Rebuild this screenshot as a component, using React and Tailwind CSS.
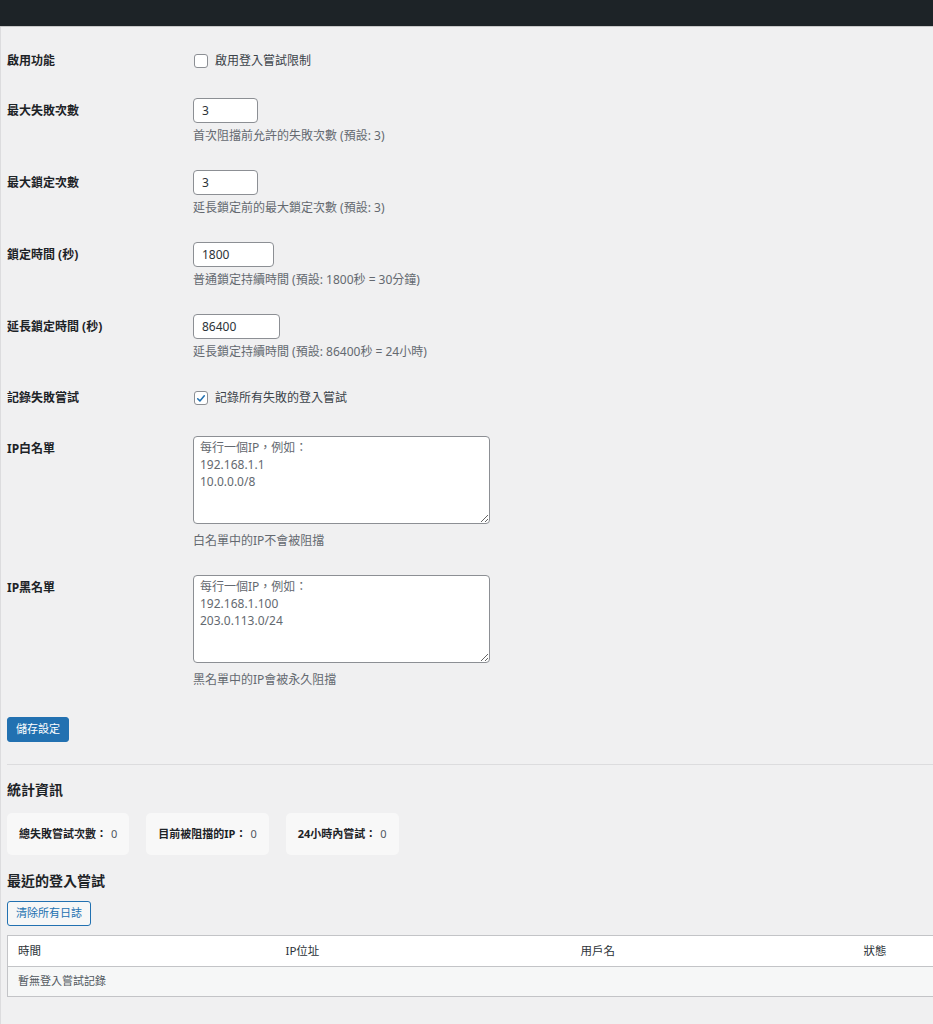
import React from "react";

const font = { fontFamily: '"Noto Sans", "Noto Sans CJK TC", sans-serif' };

function Check({ checked }) {
  return (
    <span className="ml-[1px] flex h-[14px] w-[14px] items-center justify-center rounded-[3px] border border-[#8c8f94] bg-white">
      {checked && (
        <svg viewBox="0 0 20 20" className="h-[13px] w-[13px]">
          <path d="M4.5 10.5 L8.2 14 L15.5 5.5" fill="none" stroke="#2271b1" strokeWidth="2.6" strokeLinecap="round" strokeLinejoin="round" />
        </svg>
      )}
    </span>
  );
}

function CheckRow({ label, text, checked, h }) {
  return (
    <div className={`grid grid-cols-[186px_1fr] items-center ${h}`}>
      <div className="text-[12px] font-bold leading-[16px] text-[#1d2327]">{label}</div>
      <label className="flex items-center gap-[7px] text-[12px] leading-[16px] text-[#3c434a]">
        <Check checked={checked} />
        <span>{text}</span>
      </label>
    </div>
  );
}

function InputRow({ label, value, w, desc }) {
  return (
    <div className="grid grid-cols-[186px_1fr] py-[13px]">
      <div className="text-[12px] font-bold leading-[25px] text-[#1d2327]">{label}</div>
      <div>
        <div className={`flex h-[25px] items-center rounded-[4px] border border-[#8c8f94] bg-white px-[8px] text-[12px] text-[#2c3338] ${w}`}>
          {value}
        </div>
        <p className="mt-[5px] text-[12px] leading-[16px] text-[#646970]">{desc}</p>
      </div>
    </div>
  );
}

function AreaRow({ label, placeholder, desc }) {
  return (
    <div className="grid grid-cols-[186px_1fr] py-[13px]">
      <div className="pt-[5px] text-[12px] font-bold leading-[16px] text-[#1d2327]">{label}</div>
      <div>
        <textarea
          readOnly
          placeholder={placeholder}
          className="block h-[88px] w-[297px] rounded-[4px] border border-[#8c8f94] bg-white px-[6px] pt-[2px] text-[12px] leading-[17px] text-[#2c3338] outline-none placeholder:text-[#646970]"
          style={font}
        />
        <p className="mt-[9px] text-[12px] leading-[16px] text-[#646970]">{desc}</p>
      </div>
    </div>
  );
}

function Stat({ label, value }) {
  return (
    <div className="flex h-[42px] items-center rounded-[5px] bg-[#f8f8f8] px-[12px] text-[11px] text-[#50575e]">
      <span className="font-bold text-[#1d2327]">{label}</span>
      <span className="ml-[4px]">{value}</span>
    </div>
  );
}

export default function App() {
  return (
    <div className="min-h-screen w-full overflow-hidden bg-[#f0f0f1]" style={font}>
      <div className="h-[27px] w-full border-b border-[#c8c8c8] bg-[#1d2327]" />
      <div className="min-h-[997px] w-[1140px] border-l border-[#dcdcde] pb-[20px] pl-[6px]">
        <div className="pt-[10px]">
          <CheckRow label="啟用功能" text="啟用登入嘗試限制" checked={false} h="h-[48px]" />
          <InputRow label="最大失敗次數" value="3" w="w-[65px]" desc="首次阻擋前允許的失敗次數 (預設: 3)" />
          <InputRow label="最大鎖定次數" value="3" w="w-[65px]" desc="延長鎖定前的最大鎖定次數 (預設: 3)" />
          <InputRow label="鎖定時間 (秒)" value="1800" w="w-[81px]" desc="普通鎖定持續時間 (預設: 1800秒 = 30分鐘)" />
          <InputRow label="延長鎖定時間 (秒)" value="86400" w="w-[87px]" desc="延長鎖定持續時間 (預設: 86400秒 = 24小時)" />
          <CheckRow label="記錄失敗嘗試" text="記錄所有失敗的登入嘗試" checked={true} h="h-[50px]" />
          <AreaRow label="IP白名單" placeholder={"每行一個IP，例如：\n192.168.1.1\n10.0.0.0/8"} desc="白名單中的IP不會被阻擋" />
          <AreaRow label="IP黑名單" placeholder={"每行一個IP，例如：\n192.168.1.100\n203.0.113.0/24"} desc="黑名單中的IP會被永久阻擋" />
        </div>

        <button className="mt-[16px] h-[25px] rounded-[3px] border border-[#2271b1] bg-[#2271b1] px-[8px] text-[11px] text-white">
          儲存設定
        </button>

        <div className="mt-[22px] h-px w-full bg-[#dcdcde]" />

        <h2 className="mt-[15px] text-[14px] font-bold leading-[20px] text-[#1d2327]">統計資訊</h2>
        <div className="mt-[13px] flex gap-[17px]">
          <Stat label="總失敗嘗試次數：" value="0" />
          <Stat label="目前被阻擋的IP：" value="0" />
          <Stat label="24小時內嘗試：" value="0" />
        </div>

        <h2 className="mt-[16px] text-[14px] font-bold leading-[20px] text-[#1d2327]">最近的登入嘗試</h2>
        <button className="mt-[10px] h-[25px] rounded-[3px] border border-[#2271b1] bg-[#f6f7f7] px-[8px] text-[11px] text-[#2271b1]">
          清除所有日誌
        </button>

        <table className="mt-[9px] w-[1120px] table-fixed border-collapse border border-[#c3c4c7] text-left">
          <colgroup>
            <col className="w-[268px]" />
            <col className="w-[295px]" />
            <col className="w-[283px]" />
            <col />
          </colgroup>
          <thead>
            <tr className="h-[31px] border-b border-[#c3c4c7] bg-white">
              <th className="px-[10px] text-[11.5px] font-normal text-[#2c3338]">時間</th>
              <th className="px-[10px] text-[11.5px] font-normal text-[#2c3338]">IP位址</th>
              <th className="px-[10px] text-[11.5px] font-normal text-[#2c3338]">用戶名</th>
              <th className="px-[10px] text-[11.5px] font-normal text-[#2c3338]">狀態</th>
            </tr>
          </thead>
          <tbody>
            <tr className="h-[30px] bg-[#f6f7f7]">
              <td colSpan={4} className="px-[10px] text-[11px] text-[#50575e]">暫無登入嘗試記錄</td>
            </tr>
          </tbody>
        </table>
      </div>
    </div>
  );
}
